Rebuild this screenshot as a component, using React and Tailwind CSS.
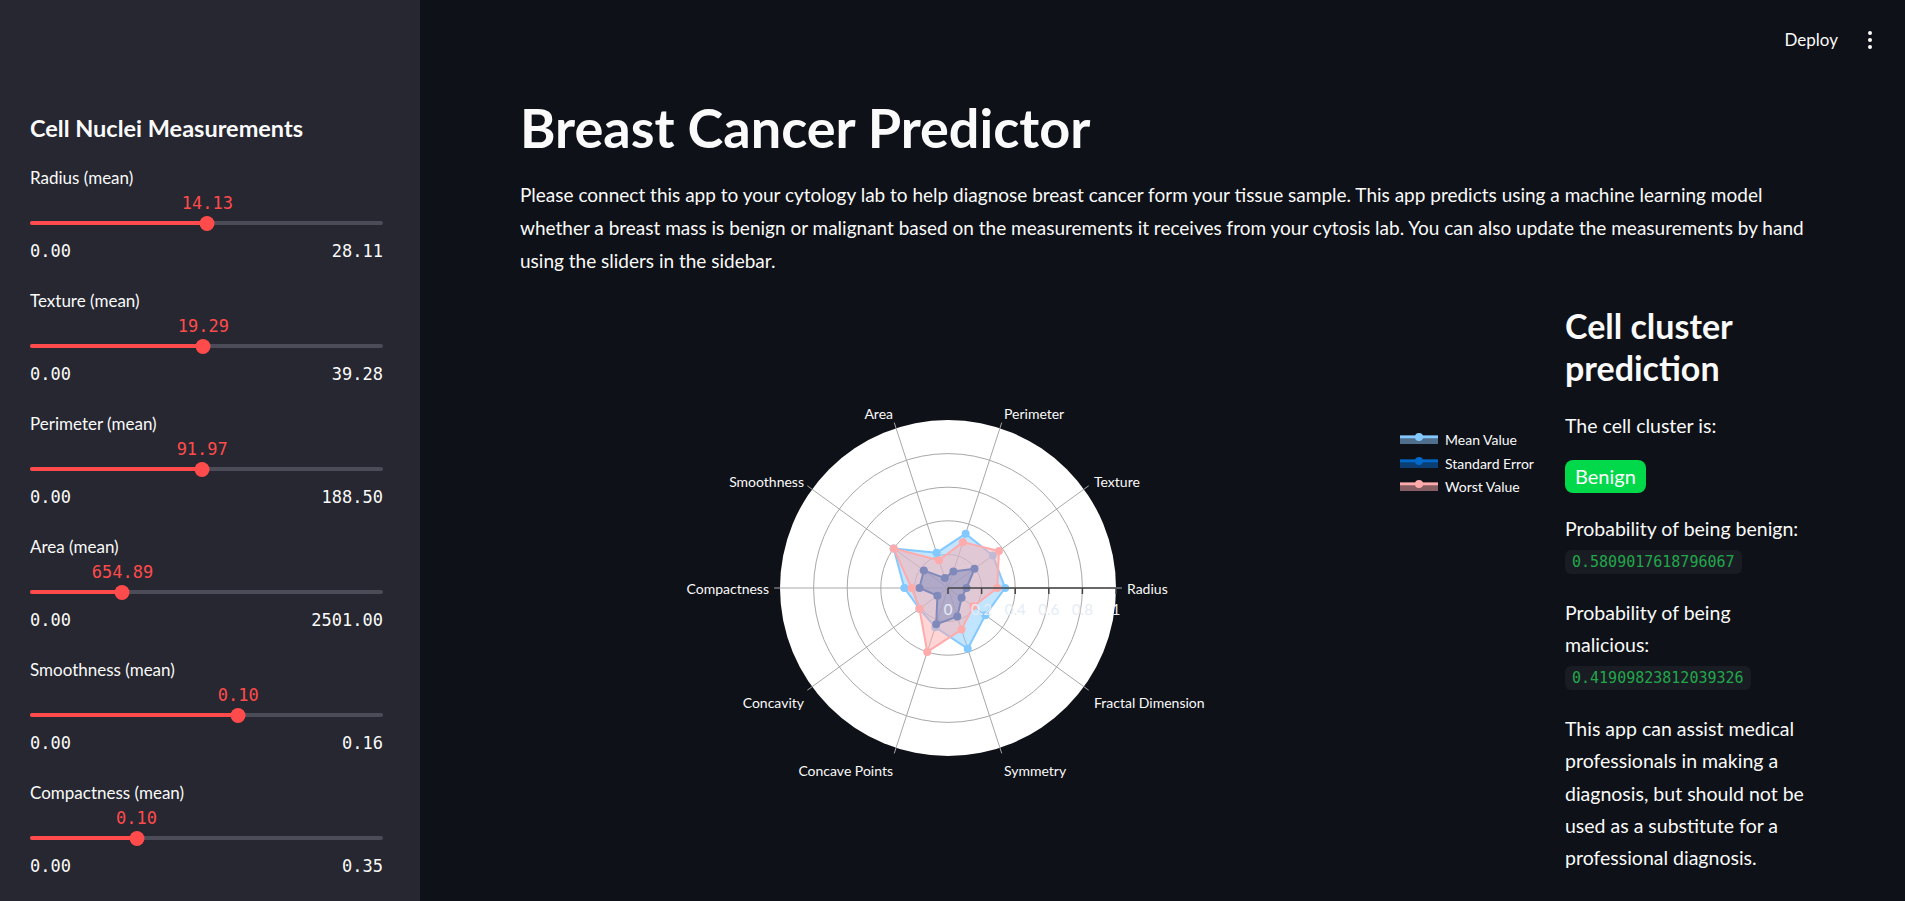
import React from "react";

const sliders = [
  { label: "Radius (mean)", value: "14.13", min: "0.00", max: "28.11", frac: 14.13 / 28.11 },
  { label: "Texture (mean)", value: "19.29", min: "0.00", max: "39.28", frac: 19.29 / 39.28 },
  { label: "Perimeter (mean)", value: "91.97", min: "0.00", max: "188.50", frac: 91.97 / 188.5 },
  { label: "Area (mean)", value: "654.89", min: "0.00", max: "2501.00", frac: 654.89 / 2501 },
  { label: "Smoothness (mean)", value: "0.10", min: "0.00", max: "0.16", frac: 0.0964 / 0.1634 },
  { label: "Compactness (mean)", value: "0.10", min: "0.00", max: "0.35", frac: 0.1043 / 0.3454 },
];

const MONO = { fontFamily: '"DejaVu Sans Mono", "Liberation Mono", monospace' };

function Slider({ s }) {
  const pct = `${(s.frac * 100).toFixed(2)}%`;
  return (
    <div className="h-[123px] flex flex-col">
      <div className="h-[24px] leading-[24px] text-[17px]">{s.label}</div>
      <div className="relative h-[26px]">
        <span
          className="absolute top-0 -translate-x-1/2 text-[#ff4b4b] text-[17px] leading-[26px] whitespace-nowrap"
          style={{ ...MONO, left: pct }}
        >
          {s.value}
        </span>
      </div>
      <div className="relative h-[14px] flex items-center">
        <div className="h-[4px] w-full rounded-full bg-[#4b4c57]" />
        <div className="absolute left-0 h-[4px] rounded-full bg-[#ff4b4b]" style={{ width: pct }} />
        <div
          className="absolute w-[15px] h-[15px] rounded-full bg-[#ff4b4b] -translate-x-1/2"
          style={{ left: pct }}
        />
      </div>
      <div className="mt-[7px] h-[30px] flex justify-between items-center text-[17px]" style={MONO}>
        <span>{s.min}</span>
        <span>{s.max}</span>
      </div>
    </div>
  );
}

const CX = 428;
const CY = 298;
const R = 168;
const cats = ["Radius", "Texture", "Perimeter", "Area", "Smoothness", "Compactness", "Concavity", "Concave Points", "Symmetry", "Fractal Dimension"];
const labelPos = [
  [607, 298, "start"],
  [574, 191, "start"],
  [484, 123, "start"],
  [373, 123, "end"],
  [284, 191, "end"],
  [249, 298, "end"],
  [284, 412, "end"],
  [373, 480, "end"],
  [484, 480, "start"],
  [574, 412, "start"],
];
const data = {
  mean: [0.34, 0.33, 0.34, 0.22, 0.4, 0.26, 0.21, 0.245, 0.38, 0.275],
  se: [0.11, 0.195, 0.104, 0.062, 0.178, 0.17, 0.078, 0.227, 0.179, 0.1],
  worst: [0.293, 0.375, 0.287, 0.174, 0.4, 0.217, 0.21, 0.4, 0.26, 0.186],
};
function pt(k, r) {
  const a = (k * 36 * Math.PI) / 180;
  return [CX + r * R * Math.cos(a), CY - r * R * Math.sin(a)];
}

function Trace({ vals, color }) {
  const pts = vals.map((v, k) => pt(k, v));
  return (
    <g>
      <polygon
        points={pts.map((p) => p.join(",")).join(" ")}
        fill={color}
        fillOpacity="0.5"
        stroke={color}
        strokeWidth="2"
        strokeLinejoin="round"
      />
      {pts.map((p, i) => (
        <circle key={i} cx={p[0]} cy={p[1]} r="4" fill={color} />
      ))}
    </g>
  );
}

function LegendItem({ y, color, fill, label }) {
  return (
    <g>
      <rect x="880" y={y - 4} width="38" height="9" fill={fill} />
      <line x1="880" x2="918" y1={y - 2} y2={y - 2} stroke={color} strokeWidth="2.5" />
      <circle cx="899" cy={y - 2} r="4" fill={color} />
      <text x="925" y={y} dominantBaseline="central" fill="#fafafa" fontSize="14">
        {label}
      </text>
    </g>
  );
}

function RadarChart() {
  return (
    <svg width="1025" height="560" style={{ fontFamily: 'Lato, "Open Sans", sans-serif' }}>
      <circle cx={CX} cy={CY} r={R} fill="#ffffff" />
      {[0.2, 0.4, 0.6, 0.8].map((r) => (
        <circle key={r} cx={CX} cy={CY} r={r * R} fill="none" stroke="#a8a8a8" strokeWidth="1" />
      ))}
      {cats.map((c, k) => {
        const [x, y] = pt(k, 1);
        const [x2, y2] = pt(k, 1.035);
        return (
          <g key={c}>
            <line x1={CX} y1={CY} x2={x} y2={y} stroke="#a8a8a8" strokeWidth="1" />
            <line x1={x} y1={y} x2={x2} y2={y2} stroke="#a8a8a8" strokeWidth="1" />
          </g>
        );
      })}
      <Trace vals={data.mean} color="#83c9ff" />
      <Trace vals={data.se} color="#0068c9" />
      <Trace vals={data.worst} color="#ffabab" />
      <line x1={CX} y1={CY} x2={CX + R} y2={CY} stroke="#444444" strokeWidth="1.5" />
      {[0, 0.2, 0.4, 0.6, 0.8, 1].map((r) => (
        <g key={r}>
          <line x1={CX + r * R} y1={CY} x2={CX + r * R} y2={CY + 6} stroke="#444444" strokeWidth="1.5" />
          <text
            x={CX + r * R}
            y={CY + 21}
            textAnchor="middle"
            dominantBaseline="central"
            fill="#e5ecf6"
            fontSize="15"
          >
            {r === 0 ? "0" : r === 1 ? "1" : String(r)}
          </text>
        </g>
      ))}
      {cats.map((c, k) => (
        <text
          key={c}
          x={labelPos[k][0]}
          y={labelPos[k][1]}
          textAnchor={labelPos[k][2]}
          dominantBaseline="central"
          fill="#fafafa"
          fontSize="14"
        >
          {c}
        </text>
      ))}
      <LegendItem y={149} color="#83c9ff" fill="#4f6f8c" label="Mean Value" />
      <LegendItem y={173} color="#0068c9" fill="#0b3f74" label="Standard Error" />
      <LegendItem y={196} color="#ffabab" fill="#875e63" label="Worst Value" />
    </svg>
  );
}

function Code({ children }) {
  return (
    <div
      className="self-start h-[24px] px-[7px] rounded-[6px] bg-[#1a1c24] text-[#21a74a] text-[15px] leading-[24px]"
      style={MONO}
    >
      {children}
    </div>
  );
}

export default function App() {
  return (
    <div
      className="flex w-[1905px] h-[901px] overflow-hidden text-[#fafafa]"
      style={{ fontFamily: 'Lato, "Open Sans", sans-serif' }}
    >
      <aside className="w-[420px] shrink-0 bg-[#262730] pl-[30px] pr-[37px] pt-[108px]">
        <h2 className="h-[40px] leading-[40px] text-[23.5px] font-bold mb-[18px] whitespace-nowrap">Cell Nuclei Measurements</h2>
        {sliders.map((s) => (
          <Slider key={s.label} s={s} />
        ))}
      </aside>
      <main className="flex-1 bg-[#0e1117] flex flex-col">
        <header className="h-[80px] flex items-center justify-end pr-[33px] gap-[30px]">
          <span className="text-[17px]">Deploy</span>
          <div className="flex flex-col gap-[3px]">
            <span className="w-[4px] h-[4px] rounded-full bg-[#fafafa]" />
            <span className="w-[4px] h-[4px] rounded-full bg-[#fafafa]" />
            <span className="w-[4px] h-[4px] rounded-full bg-[#fafafa]" />
          </div>
        </header>
        <div className="pl-[100px] pt-[15px]">
          <h1 className="text-[54px] font-bold leading-[66px]">Breast Cancer Predictor</h1>
          <p className="mt-[17px] text-[19px] leading-[33px] whitespace-nowrap">
            Please connect this app to your cytology lab to help diagnose breast cancer form your tissue sample. This app predicts using a machine learning model
            <br />
            whether a breast mass is benign or malignant based on the measurements it receives from your cytosis lab. You can also update the measurements by hand
            <br />
            using the sliders in the sidebar.
          </p>
          <div className="flex mt-[13px] gap-[20px]">
            <RadarChart />
            <div className="w-[250px] pt-[15px] flex flex-col">
              <h3 className="text-[34px] font-bold leading-[42px]">Cell cluster prediction</h3>
              <div className="mt-[21px] text-[19.5px] leading-[32px]">The cell cluster is:</div>
              <div className="mt-[18px] self-start h-[33px] px-[10px] rounded-[8px] bg-[#01d94a] text-white text-[20px] leading-[33px]">
                Benign
              </div>
              <div className="mt-[20px] text-[19.5px] leading-[32px] whitespace-nowrap">Probability of being benign:</div>
              <div className="mt-[5px] flex">
                <Code>0.5809017618796067</Code>
              </div>
              <div className="mt-[23px] text-[19.5px] leading-[32px]">
                Probability of being
                <br />
                malicious:
              </div>
              <div className="mt-[5px] flex">
                <Code>0.41909823812039326</Code>
              </div>
              <p className="mt-[23px] text-[19.5px] leading-[32.3px] whitespace-nowrap">
                This app can assist medical
                <br />
                professionals in making a
                <br />
                diagnosis, but should not be
                <br />
                used as a substitute for a
                <br />
                professional diagnosis.
              </p>
            </div>
          </div>
        </div>
      </main>
    </div>
  );
}
